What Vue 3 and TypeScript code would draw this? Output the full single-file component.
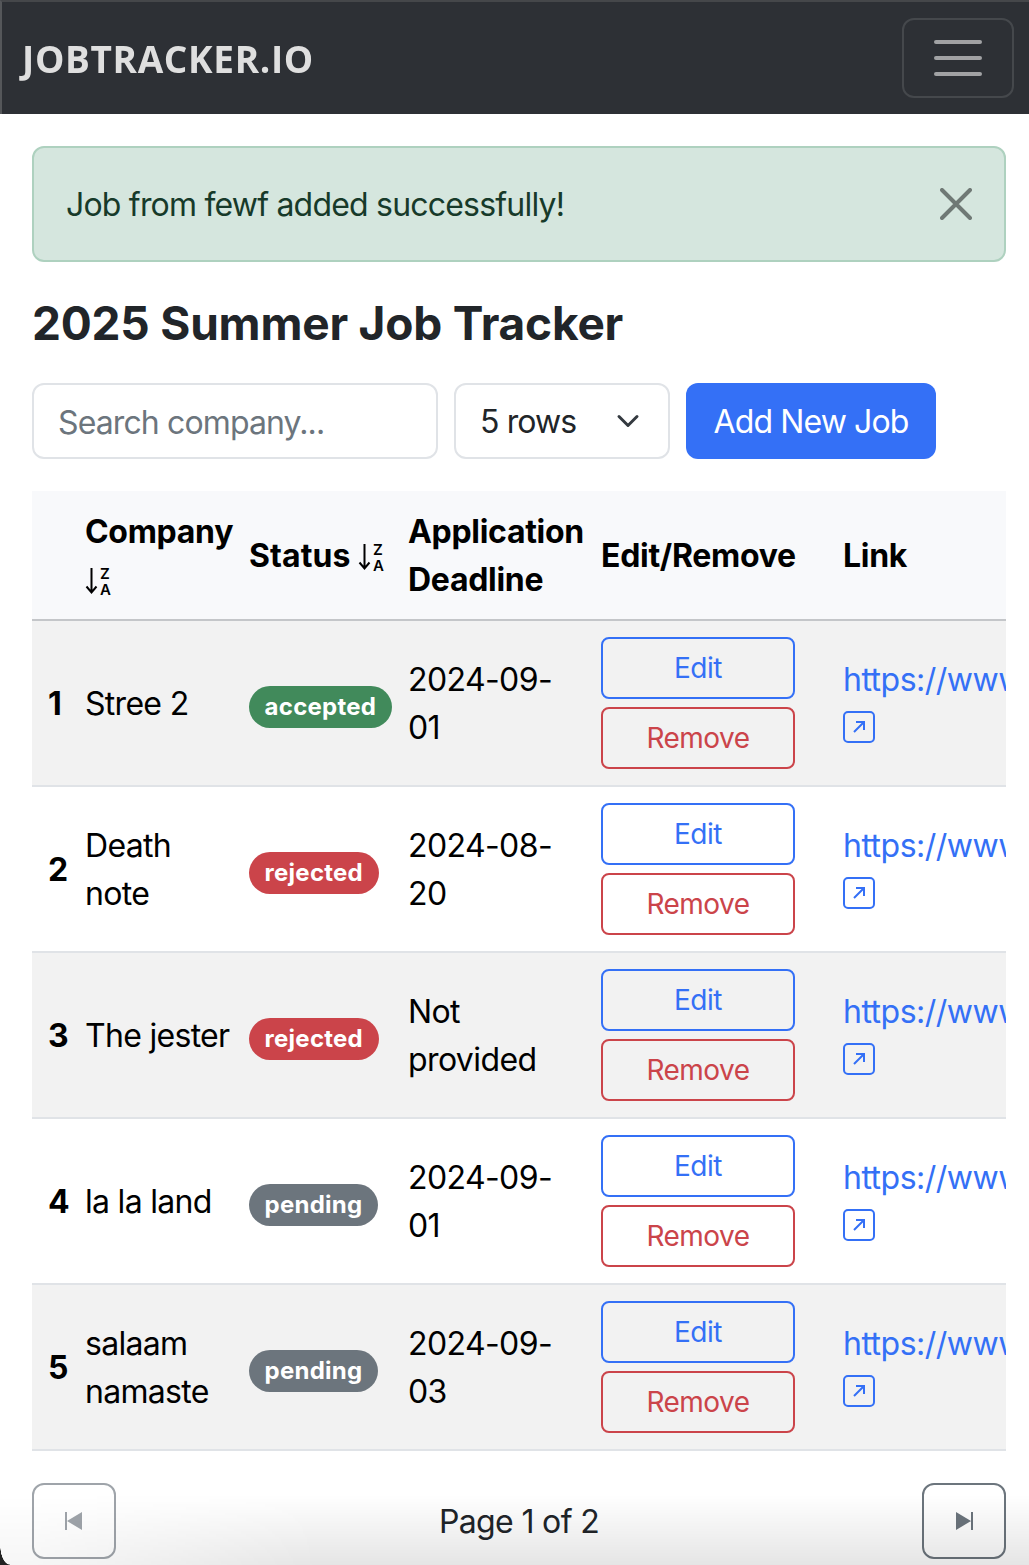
<script setup lang="ts">
interface Job {
  id: number;
  company: string;
  status: 'accepted' | 'rejected' | 'pending';
  deadline: string;
}

const jobs: Job[] = [
  { id: 1, company: 'Stree 2', status: 'accepted', deadline: '2024-09-01' },
  { id: 2, company: 'Death note', status: 'rejected', deadline: '2024-08-20' },
  { id: 3, company: 'The jester', status: 'rejected', deadline: 'Not provided' },
  { id: 4, company: 'la la land', status: 'pending', deadline: '2024-09-01' },
  { id: 5, company: 'salaam namaste', status: 'pending', deadline: '2024-09-03' }
];
</script>

<template>
  <div class="page">
    <nav class="navbar">
      <span class="brand">JOBTRACKER.IO</span>
      <button class="toggler" aria-label="Menu">
        <span></span><span></span><span></span>
      </button>
    </nav>

    <main class="content">
      <div class="alert">
        <span>Job from fewf added successfully!</span>
        <svg class="close" viewBox="0 0 32 32" aria-label="Close">
          <path d="M2 2 30 30M30 2 2 30" />
        </svg>
      </div>

      <h1>2025 Summer Job Tracker</h1>

      <div class="controls">
        <input class="search" type="text" placeholder="Search company..." />
        <div class="select">
          <span>5 rows</span>
          <svg viewBox="0 0 24 24"><path d="M3 7.5 12 16.5 21 7.5" /></svg>
        </div>
        <button class="add">Add New Job</button>
      </div>

      <div class="table-wrap">
        <table>
          <colgroup>
            <col class="c-num" />
            <col class="c-company" />
            <col class="c-status" />
            <col class="c-deadline" />
            <col class="c-actions" />
            <col class="c-link" />
          </colgroup>
          <thead>
            <tr>
              <th></th>
              <th class="tight">
                Company
                <svg class="sort" viewBox="0 0 26 32">
                  <path d="M6.5 3V27M1.5 21.5 6.5 27.5 11.5 21.5" />
                  <text x="15" y="14">Z</text>
                  <text x="15" y="30">A</text>
                </svg>
              </th>
              <th class="tight status-head">
                Status
                <svg class="sort" viewBox="0 0 26 32">
                  <path d="M6.5 3V27M1.5 21.5 6.5 27.5 11.5 21.5" />
                  <text x="15" y="14">Z</text>
                  <text x="15" y="30">A</text>
                </svg>
              </th>
              <th>Application Deadline</th>
              <th>Edit/Remove</th>
              <th>Link</th>
            </tr>
          </thead>
          <tbody>
            <tr v-for="job in jobs" :key="job.id">
              <th class="num">{{ job.id }}</th>
              <td class="tight company">{{ job.company }}</td>
              <td class="tight text-cell"><span class="badge" :class="job.status">{{ job.status }}</span></td>
              <td class="deadline">{{ job.deadline }}</td>
              <td>
                <div class="actions">
                  <button class="btn-edit">Edit</button>
                  <button class="btn-remove">Remove</button>
                </div>
              </td>
              <td>
                <a class="link">https://www.example.com</a>
                <svg class="ext" viewBox="0 0 32 32">
                  <rect x="1" y="1" width="30" height="30" rx="4" />
                  <path d="M11 21 21 11M13 11H21V19" />
                </svg>
              </td>
            </tr>
          </tbody>
        </table>
      </div>

      <div class="pager">
        <button class="page-btn disabled" aria-label="Previous">
          <svg viewBox="0 0 18 18"><path d="M0 0H2V18H0ZM2 9 17 0V18Z" /></svg>
        </button>
        <span class="page-label">Page 1 of 2</span>
        <button class="page-btn" aria-label="Next">
          <svg viewBox="0 0 18 18"><path d="M16 0H18V18H16ZM16 9 1 0V18Z" /></svg>
        </button>
      </div>
    </main>

    <!-- screenshot edge: window shadow and rounded corner -->
    <div class="fade"></div>
    <div class="corner"></div>
  </div>
</template>

<style scoped>
.page {
  position: relative;
  height: 1565px;
  overflow: hidden;
  background: #fff;
  color: #212529;
  font-family: Inter, "Liberation Sans", sans-serif;
  font-size: 32px;
  line-height: 48px;
}

.navbar {
  display: flex;
  align-items: center;
  justify-content: space-between;
  height: 114px;
  padding: 0 15px 0 20px;
  background: #2d3035;
  border-top: 2px solid #45474a;
  border-left: 2px solid #55575a;
  box-sizing: border-box;
}

.brand {
  margin-top: 2px;
  font-family: "Open Sans", sans-serif;
  font-size: 37px;
  font-weight: 700;
  letter-spacing: 0.65px;
  color: #dfdfdf;
  filter: blur(0.4px);
}

.toggler {
  display: flex;
  flex-direction: column;
  align-items: center;
  justify-content: center;
  gap: 12px;
  width: 112px;
  height: 80px;
  padding: 0;
  background: none;
  border: 2px solid #45484c;
  border-radius: 12px;
}

.toggler span {
  width: 48px;
  height: 4px;
  border-radius: 2px;
  background: #a1a2a4;
}

.content {
  padding: 32px 23px 0 32px;
}

.alert {
  display: flex;
  align-items: center;
  justify-content: space-between;
  height: 116px;
  padding: 0 32px;
  background: #d5e6de;
  border: 2px solid #aed1bf;
  border-radius: 12px;
  color: #173a2a;
  letter-spacing: -0.8px;
  box-sizing: border-box;
}

.alert span {
  margin-top: 2px;
}

.close {
  width: 32px;
  height: 32px;
  fill: none;
  stroke: #6f7975;
  stroke-width: 4;
  stroke-linecap: round;
}

h1 {
  margin: 34px 0 32px;
  font-size: 46px;
  font-weight: 700;
  line-height: 55px;
  letter-spacing: -0.2px;
}

.controls {
  display: flex;
  gap: 16px;
  margin-bottom: 32px;
  letter-spacing: -0.88px;
}

.search {
  width: 406px;
  height: 76px;
  padding: 2px 24px 0;
  border: 2px solid #e0e3e7;
  border-radius: 12px;
  font: inherit;
  letter-spacing: inherit;
  box-sizing: border-box;
}

.search::placeholder {
  color: #6c757d;
  opacity: 1;
}

.select {
  display: flex;
  align-items: center;
  justify-content: space-between;
  width: 216px;
  height: 76px;
  padding: 0 28px 0 24px;
  border: 2px solid #e0e3e7;
  border-radius: 12px;
  box-sizing: border-box;
}

.select span {
  padding-top: 2px;
}

.select svg {
  width: 24px;
  height: 24px;
  fill: none;
  stroke: #343a40;
  stroke-width: 3;
  stroke-linecap: round;
  stroke-linejoin: round;
}

.add {
  width: 250px;
  height: 76px;
  padding: 2px 0 0;
  border: 0;
  border-radius: 12px;
  background: #3470f6;
  color: #fff;
  font: inherit;
  letter-spacing: inherit;
}

.table-wrap {
  width: 974px;
  overflow: hidden;
}

table {
  width: 1100px;
  table-layout: fixed;
  border-collapse: collapse;
  color: #000;
  letter-spacing: -0.5px;
}

.c-num { width: 37px; }
.c-company { width: 164px; }
.c-status { width: 159px; }
.c-deadline { width: 193px; }
.c-actions { width: 242px; }
.c-link { width: 305px; }

th,
td {
  padding: 16px;
  text-align: left;
  vertical-align: middle;
}

thead th {
  padding-top: 17px;
  padding-bottom: 15px;
  background: #f8f9fb;
  border-bottom: 2px solid #c4c6c9;
  font-weight: 700;
  letter-spacing: -0.3px;
}

tbody th,
tbody td {
  border-bottom: 2px solid #e0e3e7;
  height: 164px;
  box-sizing: border-box;
}

tbody tr:nth-child(odd) th,
tbody tr:nth-child(odd) td {
  background: #f2f2f2;
}

.num {
  padding: 17px 0 15px 16px;
  font-weight: 700;
}

.company,
.text-cell,
.deadline {
  padding-top: 17px;
  padding-bottom: 15px;
}

.company {
  letter-spacing: -0.7px;
}

.deadline {
  padding-right: 24px;
  letter-spacing: -0.6px;
}

th.tight,
td.tight {
  padding-right: 0;
}

thead .status-head {
  letter-spacing: 0.1px;
}

.sort {
  width: 26px;
  height: 32px;
  vertical-align: -6px;
  overflow: visible;
}

.sort path {
  fill: none;
  stroke: #000;
  stroke-width: 2;
}

.sort text {
  font-size: 15px;
  font-weight: 600;
  letter-spacing: 0;
  fill: #000;
}

.badge {
  display: inline-block;
  padding: 8px 15.6px;
  border-radius: 21px;
  color: #fff;
  font-size: 24px;
  font-weight: 700;
  line-height: 26px;
  letter-spacing: 0.25px;
  white-space: nowrap;
}

.accepted { background: #418a5b; }
.rejected { background: #cb444a; }
.pending { background: #6c757d; }

.actions {
  display: flex;
  flex-direction: column;
  gap: 8px;
  width: 194px;
}

.actions button {
  height: 62px;
  padding: 0;
  background: transparent;
  border: 2px solid;
  border-radius: 8px;
  font: inherit;
  font-size: 28px;
  line-height: 42px;
  letter-spacing: -0.5px;
}

.btn-edit {
  border-color: #3470f6 !important;
  color: #3470f6;
}

.btn-remove {
  border-color: #cb444a !important;
  color: #cb444a;
}

.link {
  display: block;
  padding-top: 2px;
  color: #3470f6;
  white-space: nowrap;
}

.ext {
  display: block;
  width: 32px;
  height: 32px;
  margin: 7px 0 9px;
  fill: none;
  stroke: #3470f6;
  stroke-width: 2;
}

.pager {
  display: flex;
  align-items: center;
  justify-content: space-between;
  width: 974px;
  margin-top: 32px;
  letter-spacing: -0.65px;
}

.page-label {
  padding-top: 2px;
}

.page-btn {
  display: flex;
  align-items: center;
  justify-content: center;
  width: 84px;
  height: 76px;
  padding: 0;
  background: transparent;
  border: 2px solid #6c757d;
  border-radius: 12px;
}

.page-btn svg {
  width: 18px;
  height: 18px;
  fill: #6c757d;
}

.page-btn.disabled {
  opacity: 0.65;
}

.fade {
  position: absolute;
  left: 0;
  right: 0;
  bottom: 0;
  height: 70px;
  pointer-events: none;
  background: linear-gradient(to bottom, rgba(0, 0, 0, 0), rgba(0, 0, 0, 0.1));
  -webkit-mask-image: linear-gradient(to right, rgba(0, 0, 0, 0.35) 30px, #000 320px);
  mask-image: linear-gradient(to right, rgba(0, 0, 0, 0.35) 30px, #000 320px);
}

.corner {
  position: absolute;
  left: 0;
  bottom: 0;
  width: 10px;
  height: 20px;
  pointer-events: none;
  background: radial-gradient(ellipse 10px 20px at 100% 0, transparent 96%, #222 100%);
}
</style>

<style>
html, body { margin: 0; }
</style>
